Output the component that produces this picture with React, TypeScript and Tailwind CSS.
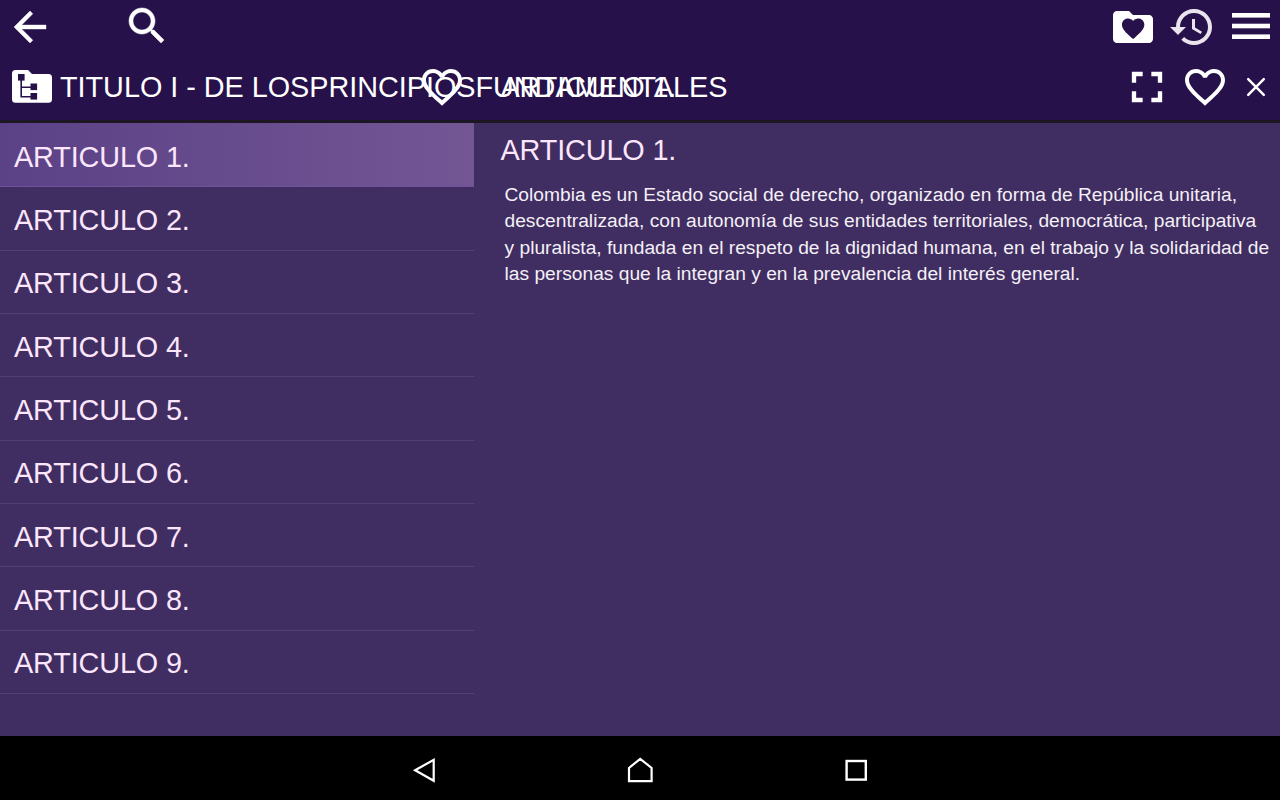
import type { ReactNode } from "react";

const articles = [
  "ARTICULO 1.",
  "ARTICULO 2.",
  "ARTICULO 3.",
  "ARTICULO 4.",
  "ARTICULO 5.",
  "ARTICULO 6.",
  "ARTICULO 7.",
  "ARTICULO 8.",
  "ARTICULO 9.",
];

const bodyLines = [
  "Colombia es un Estado social de derecho, organizado en forma de República unitaria,",
  "descentralizada, con autonomía de sus entidades territoriales, democrática, participativa",
  "y pluralista, fundada en el respeto de la dignidad humana, en el trabajo y la solidaridad de",
  "las personas que la integran y en la prevalencia del interés general.",
];

const HEART =
  "M12 21.35l-1.45-1.32C5.4 15.36 2 12.28 2 8.5 2 5.42 4.42 3 7.5 3c1.74 0 3.41.81 4.5 2.09C13.09 3.81 14.76 3 16.5 3 19.58 3 22 5.42 22 8.5c0 3.78-3.4 6.86-8.55 11.54L12 21.35z";

function Icon({ className, children }: { className: string; children: ReactNode }) {
  return (
    <svg viewBox="0 0 24 24" fill="currentColor" className={`shrink-0 ${className}`}>
      {children}
    </svg>
  );
}

function HeartOutline({ className }: { className: string }) {
  return (
    <Icon className={className}>
      <path d="M16.5 3c-1.74 0-3.41.81-4.5 2.09C10.91 3.81 9.24 3 7.5 3 4.42 3 2 5.42 2 8.5c0 3.78 3.4 6.86 8.55 11.54L12 21.35l1.45-1.32C18.6 15.36 22 12.28 22 8.5 22 5.42 19.58 3 16.5 3zm-4.4 15.55l-.1.1-.1-.1C7.14 14.24 4 11.39 4 8.5 4 6.5 5.5 5 7.5 5c1.54 0 3.04.99 3.57 2.36h1.87C13.46 5.99 14.96 5 16.5 5c2 0 3.5 1.5 3.5 3.5 0 2.89-3.14 5.74-7.9 10.05z" />
    </Icon>
  );
}

function Toolbar() {
  return (
    <div className="flex h-[52px] items-center pl-1.5 pr-2.5">
      <Icon className="mt-[2px] size-12 stroke-white stroke-[0.2]">
        <path d="M20 11H7.83l5.59-5.59L12 4l-8 8 8 8 1.41-1.41L7.83 13H20v-2z" />
      </Icon>
      <Icon className="ml-[68.5px] size-12 stroke-white stroke-[0.25]">
        <path d="M15.5 14h-.79l-.28-.27C15.41 12.59 16 11.11 16 9.5 16 5.91 13.09 3 9.5 3S3 5.91 3 9.5 5.91 16 9.5 16c1.61 0 3.09-.59 4.23-1.57l.27.28v.79l5 4.99L20.49 19l-4.99-5zm-6 0C7.01 14 5 11.99 5 9.5S7.01 5 9.5 5 14 7.01 14 9.5 11.99 14 9.5 14z" />
      </Icon>
      {/* Right side actions */}
      <div className="ml-auto flex items-center">
        <Icon className="mt-[2px] size-12">
          <path d="M10 4H4c-1.1 0-1.99.9-1.99 2L2 18c0 1.1.9 2 2 2h16c1.1 0 2-.9 2-2V8c0-1.1-.9-2-2-2h-8l-2-2z" />
          <path d={HEART} fill="#27114a" transform="translate(5.35 6.1) scale(.56)" />
        </Icon>
        <Icon className="mt-px ml-[11px] size-12 text-[#e9e4ee]">
          <path d="M13 3c-4.97 0-9 4.03-9 9H1l3.89 3.89.07.14L9 12H6c0-3.87 3.13-7 7-7s7 3.13 7 7-3.13 7-7 7c-1.93 0-3.68-.79-4.94-2.06l-1.42 1.42C8.27 19.99 10.51 21 13 21c4.97 0 9-4.03 9-9s-4.03-9-9-9zm-1 5v5l4.28 2.54.72-1.21-3.5-2.08V8H12z" />
        </Icon>
        <svg viewBox="0 0 38 26" fill="currentColor" className="ml-4 h-[26px] w-[38px]">
          <rect width="38" height="4.6" />
          <rect y="10.7" width="38" height="4.6" />
          <rect y="21.4" width="38" height="4.6" />
        </svg>
      </div>
    </div>
  );
}

function TitleBar() {
  return (
    <div className="flex h-[68px] items-center pt-px text-[28.8px] whitespace-nowrap">
      <div className="relative flex h-full w-[500.5px] shrink-0 items-center pl-3">
        <svg viewBox="0 0 40 33" className="h-[33px] w-10 shrink-0">
          <path
            d="M3.5 0H16l4 4h16.5A3.5 3.5 0 0 1 40 7.5v21.7a3.5 3.5 0 0 1-3.5 3.5h-33A3.5 3.5 0 0 1 0 29.2V3.5A3.5 3.5 0 0 1 3.5 0z"
            fill="currentColor"
          />
          <g fill="#27114a">
            <rect x="6" y="4" width="6.6" height="6.6" />
            <rect x="18.5" y="13.5" width="6.6" height="6.6" />
            <rect x="18.5" y="23" width="6.6" height="6.6" />
          </g>
          <path d="M9.2 10v16.7H19M9.2 17.2H19" fill="none" stroke="#27114a" strokeWidth="1.6" />
        </svg>
        <span className="mt-[2px] ml-2 tracking-[-0.02px]">TITULO I - DE LOSPRINCIPIOSFUNDAMENTALES</span>
        {/* the title runs under the favourite button and into the next pane */}
        <div className="absolute top-[9.5px] left-[418px]">
          <HeartOutline className="size-12" />
        </div>
      </div>
      <span className="mt-[2px] tracking-[-0.13px]">ARTICULO 1.</span>
      <div className="ml-auto flex items-center pr-3.5">
        <Icon className="size-[52px]">
          <path d="M7 14H5v5h5v-2H7v-3zm-2-4h2V7h3V5H5v5zm12 7h-3v2h5v-5h-2v3zM14 5v2h3v3h2V5h-5z" />
        </Icon>
        <HeartOutline className="ml-2 size-12" />
        <svg
          viewBox="0 0 20 20"
          className="ml-[17px] size-5"
          fill="none"
          stroke="currentColor"
          strokeWidth="2.5"
          strokeLinecap="round"
        >
          <path d="M2.2 2.2l15.6 15.6M17.8 2.2L2.2 17.8" />
        </svg>
      </div>
    </div>
  );
}

function ArticleList() {
  return (
    <ul className="w-[474px] shrink-0 text-[28.8px] tracking-[-0.13px] text-[#fbe6fb]">
      {articles.map((name, i) => (
        <li
          key={name}
          className={`flex items-center border-b pl-3.5 ${
            i === 0
              ? "h-[64.3px] border-[#70529a] bg-linear-to-r from-[#5b4186] to-[#735694] pt-[5px]"
              : "h-[63.35px] border-[#543e79] pt-1"
          }`}
        >
          {name}
        </li>
      ))}
    </ul>
  );
}

function NavBar() {
  return (
    <nav className="flex h-16 items-center justify-center gap-[188px] bg-black pt-1 text-white">
      <svg viewBox="0 0 28 28" className="size-7" fill="none" stroke="currentColor" strokeWidth="2.2">
        <path d="M5.1 14.3L23.7 3.8v21z" />
      </svg>
      <svg viewBox="0 0 28 28" className="size-7" fill="none" stroke="currentColor" strokeWidth="2.2">
        <path d="M3 25.2V12L14.2 2.8 25.6 12v13.2z" />
      </svg>
      <svg viewBox="0 0 28 28" className="size-7" fill="none" stroke="currentColor" strokeWidth="2.4">
        <rect x="4.6" y="5" width="19.2" height="18.6" />
      </svg>
    </nav>
  );
}

export default function App() {
  return (
    <div className="flex h-[800px] w-[1280px] flex-col overflow-hidden bg-[#402d61] font-['Liberation_Sans',Arial,sans-serif] text-white">
      <header className="h-[123px] shrink-0 border-b-[3px] border-[#1c1722] bg-[#27114a]">
        <Toolbar />
        <TitleBar />
      </header>

      <main className="flex flex-1">
        <ArticleList />
        <article className="pt-2.5 pl-[26.5px]">
          <h1 className="text-[28.8px] leading-[34px] tracking-[-0.13px] text-[#fbe6fb]">ARTICULO 1.</h1>
          <div className="pt-[15px] pl-1 text-[19.2px] leading-[26.4px] tracking-[0.01px] whitespace-nowrap text-[#f4f0f7]">
            {bodyLines.map((line) => (
              <p key={line}>{line}</p>
            ))}
          </div>
        </article>
      </main>

      <NavBar />
    </div>
  );
}
